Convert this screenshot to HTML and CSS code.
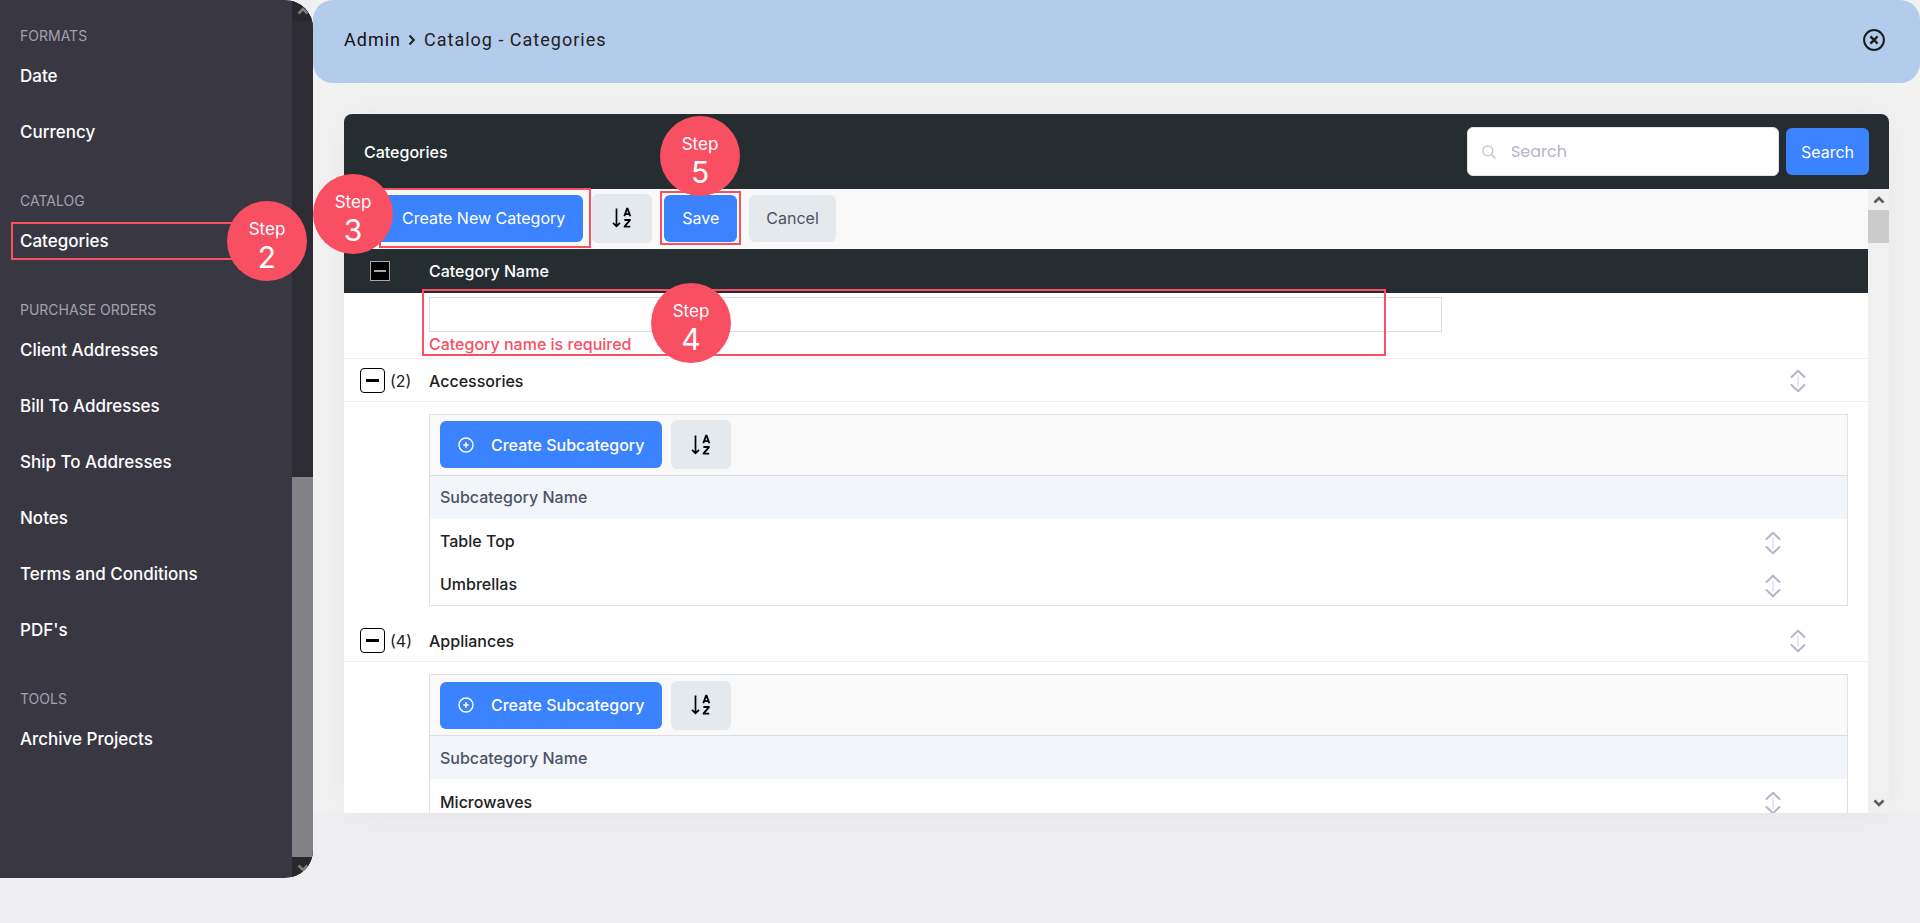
FILE: index.html
```html
<!DOCTYPE html>
<html lang="en">
<head>
<meta charset="utf-8">
<title>Admin - Catalog - Categories</title>
<link rel="stylesheet" href="styles.css">
</head>
<body>
<svg class="sprite" aria-hidden="true">
  <symbol id="i-up" viewBox="0 0 12 10"><path d="M1.5 7.5 6 3l4.500 4.500" fill="none" stroke="currentColor" stroke-width="2.600"/></symbol>
  <symbol id="i-down" viewBox="0 0 12 10"><path d="M1.500 2.500 6 7l4.500-4.500" fill="none" stroke="currentColor" stroke-width="2.600"/></symbol>
  <symbol id="i-sort" viewBox="0 0 20 22">
    <path d="M4.500 1.500v18M1 15.800l3.500 3.500L8 15.800" fill="none" stroke="#000" stroke-width="1.700"/>
    <path d="M12.300 9.300 15 1.700h.600l2.700 7.600M13.300 7.200h4M12.400 13h5.400v.400l-5.200 5.900v.300h5.600" fill="none" stroke="#000" stroke-width="1.800"/>
  </symbol>
  <symbol id="i-move" viewBox="0 0 16 24">
    <path d="M1.500 8 8 1.800 14.500 8M1.500 16 8 22.200 14.500 16" fill="none" stroke="#b5b5c9" stroke-width="2" stroke-linecap="round" stroke-linejoin="round"/>
    <path d="M8 7.500v9" stroke="#e6e6ee" stroke-width="2" stroke-linecap="round"/>
  </symbol>
  <symbol id="i-plus" viewBox="0 0 16 16">
    <circle cx="8" cy="8" r="7" fill="none" stroke="#fff" stroke-width="1.400"/>
    <path d="M8 5.300v5.400M5.300 8h5.400" stroke="#fff" stroke-width="1.600"/>
  </symbol>
</svg>

<div class="app">
  <aside class="sidebar">
    <nav class="menu">
      <section class="menu-group">
        <h2 class="menu-title">FORMATS</h2>
        <a class="menu-link" href="#date">Date</a>
        <a class="menu-link" href="#currency">Currency</a>
      </section>
      <section class="menu-group">
        <h2 class="menu-title">CATALOG</h2>
        <a class="menu-link" href="#categories">Categories</a>
      </section>
      <section class="menu-group">
        <h2 class="menu-title">PURCHASE ORDERS</h2>
        <a class="menu-link" href="#client">Client Addresses</a>
        <a class="menu-link" href="#bill">Bill To Addresses</a>
        <a class="menu-link" href="#ship">Ship To Addresses</a>
        <a class="menu-link" href="#notes">Notes</a>
        <a class="menu-link" href="#terms">Terms and Conditions</a>
        <a class="menu-link" href="#pdfs">PDF's</a>
      </section>
      <section class="menu-group">
        <h2 class="menu-title">TOOLS</h2>
        <a class="menu-link" href="#archive">Archive Projects</a>
      </section>
    </nav>
    <div class="track track-dark" aria-hidden="true">
      <span class="track-end"><svg class="chev"><use href="#i-up"/></svg></span>
      <span class="track-gap"></span>
      <span class="track-thumb"></span>
      <span class="track-end"><svg class="chev"><use href="#i-down"/></svg></span>
    </div>
  </aside>

  <main class="main">
    <header class="topbar">
      <nav class="crumbs">
        <a class="crumb" href="#admin">Admin</a>
        <svg class="crumb-sep" viewBox="0 0 8 12"><path d="M1.500 1.500 5.800 6l-4.300 4.500" fill="none" stroke="#181c1e" stroke-width="1.900"/></svg>
        <span class="crumb-current">Catalog - Categories</span>
      </nav>
      <button class="close" aria-label="Close">
        <svg class="close-icon" viewBox="0 0 22 22"><circle cx="11" cy="11" r="9.900" fill="none" stroke="#181c1e" stroke-width="2"/><path d="m7.400 7.400 7.200 7.200M14.600 7.400l-7.200 7.200" stroke="#181c1e" stroke-width="2.400"/></svg>
      </button>
    </header>

    <section class="card">
      <header class="card-head">
        <h1 class="card-title">Categories</h1>
        <form class="search">
          <label class="search-box">
            <svg class="search-icon" viewBox="0 0 14 14"><circle cx="5.800" cy="5.800" r="5" fill="none" stroke="#c3c3c8" stroke-width="1.300"/><path d="m9.400 9.400 4 4" stroke="#c3c3c8" stroke-width="1.400"/></svg>
            <input class="search-input" type="text" placeholder="Search" aria-label="Search">
          </label>
          <button class="btn btn-blue" type="button">Search</button>
        </form>
      </header>

      <div class="card-body">
        <div class="list">
          <div class="toolbar">
            <button class="btn btn-blue btn-create"><svg class="plus"><use href="#i-plus"/></svg>Create New Category</button>
            <button class="btn btn-gray btn-sort" aria-label="Sort A to Z"><svg class="sort"><use href="#i-sort"/></svg></button>
            <button class="btn btn-blue btn-save">Save</button>
            <button class="btn btn-gray">Cancel</button>
          </div>
          <table class="cats">
            <thead>
              <tr>
                <th class="col-toggle"><button class="toggle-all" aria-label="Collapse all"></button></th>
                <th>Category Name</th>
                <th class="col-move"></th>
              </tr>
            </thead>
            <tbody>
              <tr class="new-row">
                <td></td>
                <td>
                  <input class="name-input" id="name" type="text" aria-describedby="name-error" aria-label="Category name">
                  <p class="error" id="name-error">Category name is required</p>
                </td>
                <td></td>
              </tr>
              <tr class="cat-row">
                <td><div class="toggle-cell"><button class="toggle" aria-label="Collapse Accessories"></button><span>(2)</span></div></td>
                <td>Accessories</td>
                <td class="col-move"><svg class="move"><use href="#i-move"/></svg></td>
              </tr>
              <tr>
                <td class="sub-cell" colspan="3">
                  <div class="sub">
                    <div class="toolbar sub-toolbar">
                      <button class="btn btn-blue btn-sub"><svg class="plus"><use href="#i-plus"/></svg>Create Subcategory</button>
                      <button class="btn btn-gray btn-sort" aria-label="Sort A to Z"><svg class="sort"><use href="#i-sort"/></svg></button>
                    </div>
                    <table class="subs">
                      <thead><tr><th>Subcategory Name</th><th class="sub-move"></th></tr></thead>
                      <tbody>
                        <tr><td>Table Top</td><td class="sub-move"><svg class="move"><use href="#i-move"/></svg></td></tr>
                        <tr><td>Umbrellas</td><td class="sub-move"><svg class="move"><use href="#i-move"/></svg></td></tr>
                      </tbody>
                    </table>
                  </div>
                </td>
              </tr>
              <tr class="cat-row">
                <td><div class="toggle-cell"><button class="toggle" aria-label="Collapse Appliances"></button><span>(4)</span></div></td>
                <td>Appliances</td>
                <td class="col-move"><svg class="move"><use href="#i-move"/></svg></td>
              </tr>
              <tr>
                <td class="sub-cell" colspan="3">
                  <div class="sub">
                    <div class="toolbar sub-toolbar">
                      <button class="btn btn-blue btn-sub"><svg class="plus"><use href="#i-plus"/></svg>Create Subcategory</button>
                      <button class="btn btn-gray btn-sort" aria-label="Sort A to Z"><svg class="sort"><use href="#i-sort"/></svg></button>
                    </div>
                    <table class="subs">
                      <thead><tr><th>Subcategory Name</th><th class="sub-move"></th></tr></thead>
                      <tbody>
                        <tr><td>Microwaves</td><td class="sub-move"><svg class="move"><use href="#i-move"/></svg></td></tr>
                      </tbody>
                    </table>
                  </div>
                </td>
              </tr>
            </tbody>
          </table>
        </div>
        <div class="track track-light" aria-hidden="true">
          <span class="track-end"><svg class="chev"><use href="#i-up"/></svg></span>
          <span class="track-thumb"></span>
          <span class="track-gap"></span>
          <span class="track-end"><svg class="chev"><use href="#i-down"/></svg></span>
        </div>
      </div>
    </section>
  </main>
</div>

<div class="frame frame-2"></div>
<div class="frame frame-3"></div>
<div class="frame frame-4"></div>
<div class="frame frame-5"></div>
<div class="step step-2"><span>Step</span><b class="step-num">2</b></div>
<div class="step step-3"><span>Step</span><b class="step-num">3</b></div>
<div class="step step-4"><span>Step</span><b class="step-num">4</b></div>
<div class="step step-5"><span>Step</span><b class="step-num">5</b></div>
</body>
</html>
```
FILE: styles.css
```css
* { box-sizing: border-box; }
body {
  margin: 0;
  position: relative;
  min-height: 100vh;
  overflow: hidden;
  background: #efeff1;
  color: #212121;
  font: 400 16px/20px Inter, sans-serif;
}
h1, h2, p { margin: 0; }
button, input { font: inherit; }
button { border: 0; padding: 0; cursor: pointer; }
a { color: inherit; text-decoration: none; }
svg { display: block; flex: none; }
.sprite { position: absolute; width: 0; height: 0; }

.app { display: flex; align-items: flex-start; }

/* Sidebar */
.sidebar {
  display: flex;
  flex: none;
  width: 313px;
  height: calc(100vh - 45px);
  border-radius: 0 28px 28px 0;
  overflow: hidden;
  background: #393842;
}
.menu {
  flex: 1;
  display: flex;
  flex-direction: column;
  gap: 29px;
  padding: 24px 20px;
}
.menu-title { font-size: 14px; font-weight: 400; line-height: 24px; color: #a2a1b0; }
.menu-link {
  display: block;
  font-size: 17px;
  font-weight: 500;
  line-height: 56px;
  color: #fff;
}

/* Scrollbars */
.track { display: flex; flex-direction: column; flex: none; width: 21px; }
.track-end { display: grid; place-items: center; height: 21px; }
.track-gap { flex: 1; }
.chev { width: 12px; height: 10px; }
.track-dark { background: #2d2c35; color: #7c7b80; }
.track-dark .track-end { background: #28272c; }
.track-dark .track-thumb { height: 380px; background: #828186; }
.track-light { background: #f0f0f0; color: #5c5c5c; }
.track-light .track-thumb { height: 33px; background: #cbcbcb; }

/* Top bar */
.main { flex: 1; min-width: 0; height: calc(100vh - 110px); background: #f2f2f2; }
.topbar {
  display: flex;
  align-items: center;
  justify-content: space-between;
  height: 83px;
  padding: 0 35px 4px 31px;
  border-radius: 20px;
  background: #b3cceb;
}
.crumbs {
  display: flex;
  align-items: center;
  font-family: Roboto, sans-serif;
  font-size: 18px;
  letter-spacing: 1px;
  color: #212121;
}
.crumb { color: #111; }
.crumb-sep { width: 8px; height: 12px; margin: 0 8px 0 7px; }
.close { background: none; }
.close-icon { width: 22px; height: 22px; }

/* Card */
.card {
  margin: 31px 31px 0;
  border-radius: 8px 8px 0 0;
  box-shadow: 0 0 40px rgba(0, 0, 0, 0.05);
}
.card-head {
  display: flex;
  align-items: center;
  justify-content: space-between;
  height: 75px;
  padding: 0 20px;
  border-radius: 8px 8px 0 0;
  background: #262d31;
}
.card-title { font-size: 16px; font-weight: 500; color: #fff; }
.search { display: flex; align-items: center; gap: 7px; }
.search-box {
  display: flex;
  align-items: center;
  gap: 15px;
  width: 312px;
  height: 49px;
  padding: 0 14px;
  border: 1px solid #e2e5ea;
  border-radius: 6px;
  background: #fff;
}
.search-icon { width: 14px; height: 14px; }
.search-input { flex: 1; min-width: 0; padding: 0; border: 0; outline: 0; font-family: Poppins, Inter, sans-serif; }
.search-input::placeholder { color: #b5b5c3; opacity: 1; }

.btn {
  display: flex;
  align-items: center;
  justify-content: center;
  height: 47px;
  padding: 0 15px;
  border-radius: 6px;
  font-size: 16px;
  white-space: nowrap;
}
.btn-blue { background: #3b82ff; color: #fff; }
.btn-gray { background: #e4e9ed; color: #4b5266; }
.toolbar .btn { padding: 0 18px; }
.toolbar .btn:last-child { padding: 0 17px; }
.btn-create { margin-right: 9px; gap: 14px; }
.toolbar .btn-sort.btn-sort { width: 60px; height: 49px; padding: 0; }
.btn-save { margin: 0 12px; }
.btn-sub { gap: 17px; margin-right: 9px; }
.plus { width: 16px; height: 16px; }
.sort { width: 20px; height: 22px; }

.card-body { display: flex; height: calc(100vh - 299px); overflow: hidden; }
.list { flex: 1; min-width: 0; background: #fff; }
.toolbar {
  display: flex;
  align-items: center;
  height: 60px;
  padding: 0 10px 2px;
  background: #f9f9f9;
}

table { width: 100%; border-collapse: collapse; }
th, td { padding: 0; text-align: left; font-weight: 500; }
.cats { table-layout: fixed; }
.cats > thead th { height: 44px; background: #262d31; color: #fff; }
.col-toggle { width: 85px; }
.col-move { width: 140px; }
.sub-move { width: 148px; }
.move { width: 16px; height: 24px; margin: 0 auto; }

.toggle-all {
  display: grid;
  place-items: center;
  width: 20px;
  height: 20px;
  margin-left: 26px;
  border: 1px solid #a9a9a9;
  background: #000;
}
.toggle-all::before { content: ""; width: 12px; height: 2px; background: #a9a9a9; }
.toggle {
  display: grid;
  place-items: center;
  width: 25px;
  height: 25px;
  border: 1px solid #000;
  border-radius: 4px;
  background: #fff;
}
.toggle::before { content: ""; width: 13px; height: 3px; background: #000; }
.toggle-cell { display: flex; align-items: center; gap: 5px; padding-left: 16px; font-weight: 400; }

.new-row td { height: 65px; padding-top: 4px; border-bottom: 1px solid #f1f1f3; vertical-align: top; }
.name-input { display: block; width: 78%; height: 35px; padding: 0 8px; border: 1px solid #dcdcdf; background: #fff; }
.error { padding-top: 2px; color: #f84f62; }
.cat-row > td { height: 43px; padding-top: 2px; border-bottom: 1px solid #f1f1f3; }

.sub-cell { padding: 12px 20px 13px 85px; }
.sub { border: 1px solid #e0e1e4; }
.sub-toolbar { height: 61px; border-bottom: 1px solid #dcdee1; padding-bottom: 0; }
.subs th, .subs td { height: 43px; padding-left: 10px; }
.subs td { padding-top: 2px; }
.subs .sub-move { padding: 5px 0 0; }
.subs th { background: #f2f6fa; color: #4b5266; }

/* Walkthrough markers */
.frame { position: absolute; border: 2px solid #f84f62; }
.step {
  position: absolute;
  display: flex;
  flex-direction: column;
  align-items: center;
  width: 80px;
  height: 80px;
  padding-top: 16px;
  border-radius: 50%;
  background: #f84f62;
  color: #fff;
  font-size: 17px;
  line-height: 24px;
}
.step-num { font-size: 30px; font-weight: 400; line-height: 32px; }
.frame-2 { left: 11px; top: 222px; width: 240px; height: 38px; }
.frame-3 { left: 379px; top: 188px; width: 212px; height: 60px; }
.frame-4 { left: 422px; top: 289px; width: 964px; height: 67px; }
.frame-5 { left: 660px; top: 191px; width: 81px; height: 54px; }
.step-2 { left: 227px; top: 201px; }
.step-3 { left: 313px; top: 174px; }
.step-4 { left: 651px; top: 283px; }
.step-5 { left: 660px; top: 116px; }
```
